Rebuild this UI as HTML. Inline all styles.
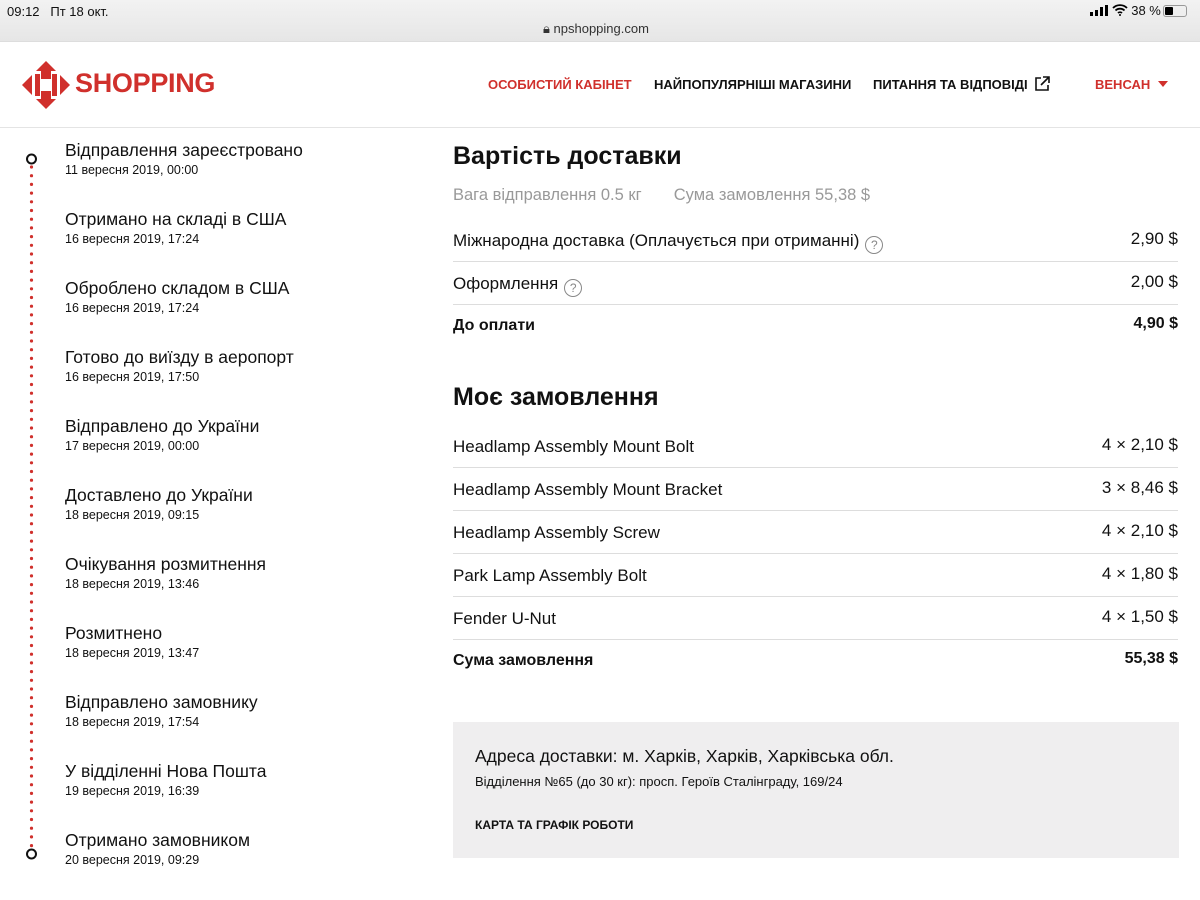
<!DOCTYPE html>
<html><head><meta charset="utf-8"><style>
*{margin:0;padding:0;box-sizing:border-box}
body{width:1200px;height:900px;overflow:hidden;background:#fff;font-family:"Liberation Sans",sans-serif;color:#111;position:relative}
.sb{position:absolute;left:0;top:0;width:1200px;height:42px;background:linear-gradient(#f2f2f2,#e6e6e6);border-bottom:1px solid #ddd}
.abs{position:absolute;white-space:nowrap}
.hdr{position:absolute;top:42px;left:0;width:1200px;height:86px;border-bottom:1px solid #e4e4e4;background:#fff}
.nav{font-size:13px;font-weight:bold;top:77px}
.tl .t{position:absolute;left:65px;font-size:17.5px;white-space:nowrap}
.tl .d{position:absolute;left:65px;font-size:12.5px;white-space:nowrap}
.row{position:absolute;left:453px;width:725px;height:43px;border-bottom:1px solid #ddd;font-size:17px}
.row span{position:absolute;top:12px;white-space:nowrap}
.row .r{right:0}
.row.b{border-bottom:none;font-weight:bold;font-size:16px}
.q{display:inline-block;width:18px;height:18px;border:1.4px solid #888;border-radius:50%;font-size:12px;color:#888;text-align:center;line-height:16px;vertical-align:-3px;margin-left:6px;font-weight:normal;font-style:normal}
h2{position:absolute;left:453px;font-size:25px;font-weight:bold;white-space:nowrap}
</style></head><body>
<div class="sb"></div>
<div class="abs" style="left:7px;top:4px;font-size:13px">09:12&nbsp;&nbsp;&nbsp;Пт 18 окт.</div>
<div class="abs" style="left:543px;top:21px;font-size:13px;color:#333">🔒︎ npshopping.com</div>
<div class="abs" style="left:1090px;top:3px;font-size:13px">
<svg width="18" height="11" style="vertical-align:-1px"><rect x="0" y="7" width="3" height="4"/><rect x="5" y="5" width="3" height="6"/><rect x="10" y="2" width="3" height="9"/><rect x="15" y="0" width="3" height="11"/></svg>
<svg width="16" height="12" style="vertical-align:-1px"><path d="M1 4a10 10 0 0 1 14 0M3.5 6.5a6.5 6.5 0 0 1 9 0M6 9a3 3 0 0 1 4 0" stroke="#000" stroke-width="1.8" fill="none"/><circle cx="8" cy="11" r="1"/></svg>
38 %<span style="display:inline-block;width:24px;height:12px;border:1px solid #999;border-radius:3px;vertical-align:-2px;padding:1px;margin-left:2px"><span style="display:block;width:8px;height:8px;background:#000;border-radius:1px"></span></span></div>
<div class="hdr"></div>
<svg class="abs" style="left:21px;top:60px" width="50" height="50" viewBox="0 0 50 50"><g fill="#d0302c">
<path d="M25 1 L35 11 L30 11 L30 19 L20 19 L20 11 L15 11Z"/>
<path d="M25 49 L35 39 L30 39 L30 31 L20 31 L20 39 L15 39Z"/>
<path d="M1 25 L11 15 L11 35Z"/><path d="M49 25 L39 15 L39 35Z"/>
<rect x="14" y="14" width="5" height="22"/><rect x="31" y="14" width="5" height="22"/></g></svg>
<div class="abs" style="left:75px;top:68px;font-size:27px;font-weight:bold;color:#d0302c;letter-spacing:-0.3px">SHOPPING</div>
<div class="abs nav" style="left:488px;color:#d0302c">ОСОБИСТИЙ КАБІНЕТ</div>
<div class="abs nav" style="left:654px">НАЙПОПУЛЯРНІШІ МАГАЗИНИ</div>
<div class="abs nav" style="left:873px">ПИТАННЯ ТА ВІДПОВІДІ</div>
<svg class="abs" style="left:1034px;top:76px" width="16" height="16"><path d="M7 2H2v12h12V9M9 1h6v6M15 1 7 9" stroke="#111" stroke-width="1.6" fill="none"/></svg>
<div class="abs nav" style="left:1095px;color:#d0302c">ВЕНСАН</div>
<svg class="abs" style="left:1158px;top:81px" width="10" height="6"><path d="M0 0h10L5 6z" fill="#d0302c"/></svg>

<svg class="abs" style="left:24px;top:150px" width="16" height="716">
<line x1="7.5" y1="17" x2="7.5" y2="697" stroke="#d0302c" stroke-width="3.2" stroke-dasharray="0 8.7" stroke-linecap="round"/>
<circle cx="7.5" cy="9" r="4.5" fill="#fff" stroke="#111" stroke-width="2"/>
<circle cx="7.5" cy="704" r="4.5" fill="#fff" stroke="#111" stroke-width="2"/></svg>
<div class="tl">
<div class="t" style="top:140px">Відправлення зареєстровано</div><div class="d" style="top:163px">11 вересня 2019, 00:00</div>
<div class="t" style="top:209px">Отримано на складі в США</div><div class="d" style="top:232px">16 вересня 2019, 17:24</div>
<div class="t" style="top:278px">Оброблено складом в США</div><div class="d" style="top:301px">16 вересня 2019, 17:24</div>
<div class="t" style="top:347px">Готово до виїзду в аеропорт</div><div class="d" style="top:370px">16 вересня 2019, 17:50</div>
<div class="t" style="top:416px">Відправлено до України</div><div class="d" style="top:439px">17 вересня 2019, 00:00</div>
<div class="t" style="top:485px">Доставлено до України</div><div class="d" style="top:508px">18 вересня 2019, 09:15</div>
<div class="t" style="top:554px">Очікування розмитнення</div><div class="d" style="top:577px">18 вересня 2019, 13:46</div>
<div class="t" style="top:623px">Розмитнено</div><div class="d" style="top:646px">18 вересня 2019, 13:47</div>
<div class="t" style="top:692px">Відправлено замовнику</div><div class="d" style="top:715px">18 вересня 2019, 17:54</div>
<div class="t" style="top:761px">У відділенні Нова Пошта</div><div class="d" style="top:784px">19 вересня 2019, 16:39</div>
<div class="t" style="top:830px">Отримано замовником</div><div class="d" style="top:853px">20 вересня 2019, 09:29</div>
</div>

<h2 style="top:142px">Вартість доставки</h2>
<div class="abs" style="left:453px;top:186px;font-size:16.5px;color:#999">Вага відправлення 0.5 кг&nbsp;&nbsp;&nbsp;&nbsp;&nbsp;&nbsp;&nbsp;Сума замовлення 55,38 $</div>
<div class="row" style="top:219px"><span>Міжнародна доставка (Оплачується при отриманні)<i class="q">?</i></span><span class="r" style="top:10px">2,90 $</span></div>
<div class="row" style="top:262px"><span>Оформлення<i class="q">?</i></span><span class="r" style="top:10px">2,00 $</span></div>
<div class="row b" style="top:305px"><span>До оплати</span><span class="r" style="top:10px">4,90 $</span></div>

<h2 style="top:383px">Моє замовлення</h2>
<div class="row" style="top:425px"><span>Headlamp Assembly Mount Bolt</span><span class="r" style="top:10px">4 × 2,10 $</span></div>
<div class="row" style="top:468px"><span>Headlamp Assembly Mount Bracket</span><span class="r" style="top:10px">3 × 8,46 $</span></div>
<div class="row" style="top:511px"><span>Headlamp Assembly Screw</span><span class="r" style="top:10px">4 × 2,10 $</span></div>
<div class="row" style="top:554px"><span>Park Lamp Assembly Bolt</span><span class="r" style="top:10px">4 × 1,80 $</span></div>
<div class="row" style="top:597px"><span>Fender U-Nut</span><span class="r" style="top:10px">4 × 1,50 $</span></div>
<div class="row b" style="top:640px"><span>Сума замовлення</span><span class="r" style="top:10px">55,38 $</span></div>

<div class="abs" style="left:453px;top:722px;width:726px;height:136px;background:#efeeef"></div>
<div class="abs" style="left:475px;top:746px;font-size:17.5px">Адреса доставки: м. Харків, Харків, Харківська обл.</div>
<div class="abs" style="left:475px;top:774px;font-size:13px">Відділення №65 (до 30 кг): просп. Героїв Сталінграду, 169/24</div>
<div class="abs" style="left:475px;top:818px;font-size:12px;font-weight:bold">КАРТА ТА ГРАФІК РОБОТИ</div>
</body></html>
